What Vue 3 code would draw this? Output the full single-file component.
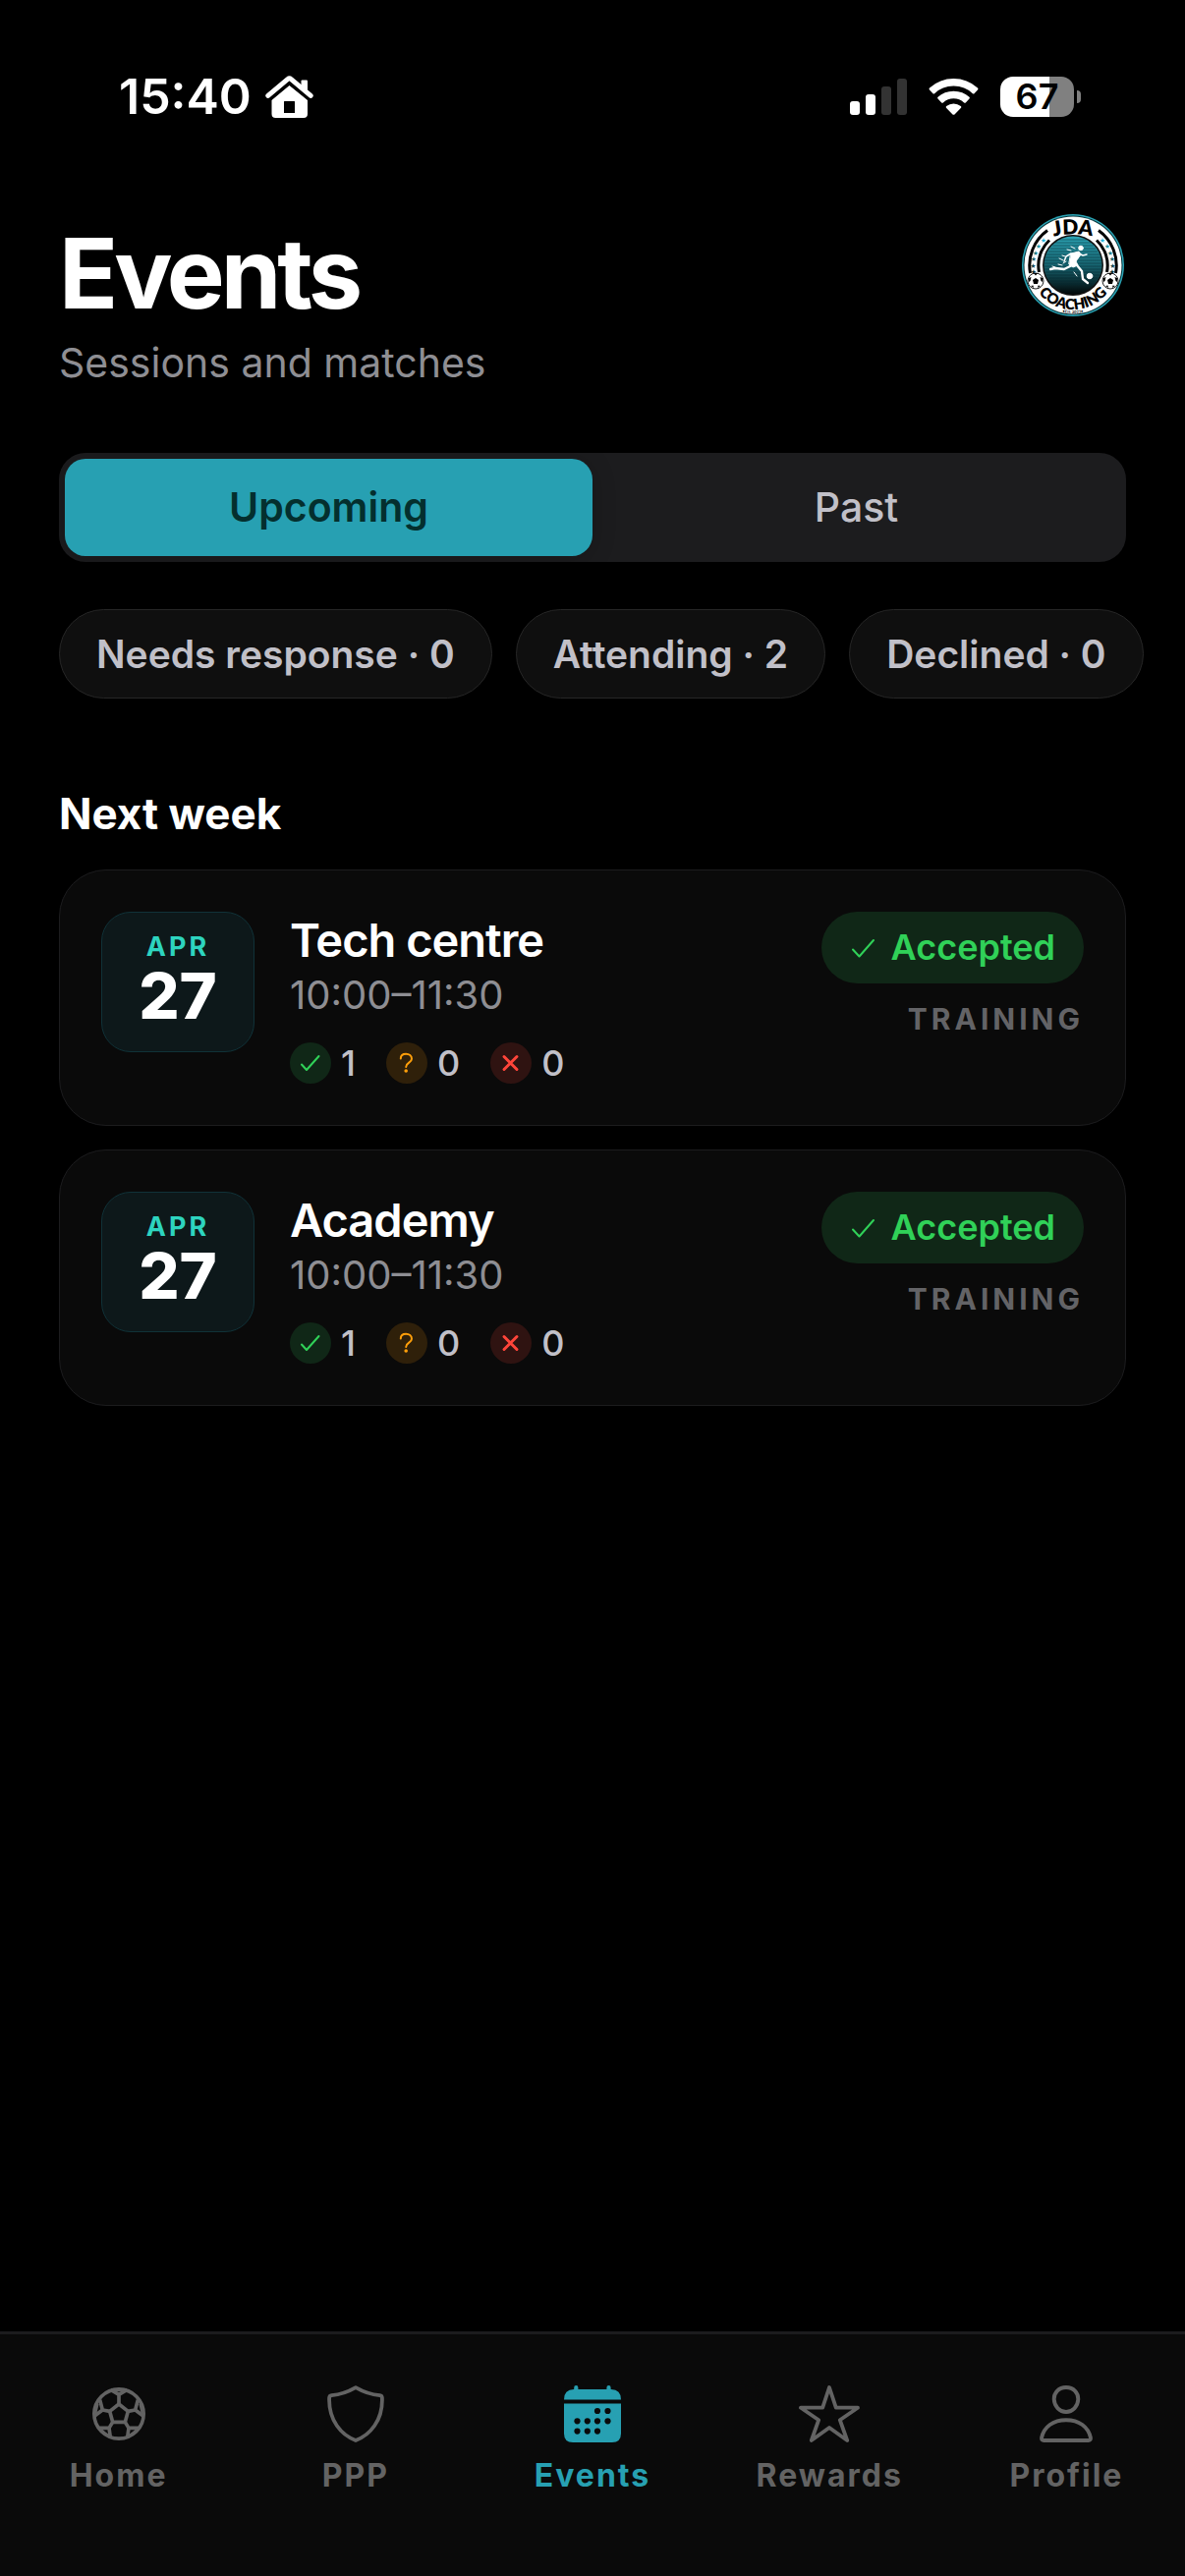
<script setup>
import { computed, ref } from 'vue'

const batteryLevel = 67
const period = ref('upcoming')
const activeFilter = ref(null)
const activeTab = ref('events')

const periods = [
  { id: 'upcoming', label: 'Upcoming' },
  { id: 'past', label: 'Past' },
]

const events = [
  { id: 1, month: 'APR', day: 27, title: 'Tech centre', time: '10:00–11:30', yes: 1, maybe: 0, no: 0, type: 'Training' },
  { id: 2, month: 'APR', day: 27, title: 'Academy', time: '10:00–11:30', yes: 1, maybe: 0, no: 0, type: 'Training' },
]

const filters = computed(() => [
  { id: 'pending', label: 'Needs response', count: 0 },
  { id: 'attending', label: 'Attending', count: events.length },
  { id: 'declined', label: 'Declined', count: 0 },
])

const tabs = [
  { id: 'home', label: 'Home' },
  { id: 'ppp', label: 'PPP' },
  { id: 'events', label: 'Events' },
  { id: 'rewards', label: 'Rewards' },
  { id: 'profile', label: 'Profile' },
]

function toggleFilter(id) {
  activeFilter.value = activeFilter.value === id ? null : id
}
</script>

<template>
  <div class="app-shell">
    <div class="status-bar">
      <div class="status-bar__side">
        <span class="status-bar__time">15:40</span>
        <svg class="status-bar__home" viewBox="0 0 49 43" aria-hidden="true">
          <path d="M36.500 5.500q0-1 1-1H42q1 0 1 1V20l-6.500-6z" fill="#fff" />
          <path d="M2.800 20.300 22.700 3.600q1.800-1.400 3.600 0L46.200 20.300" fill="none" stroke="#fff" stroke-width="5" stroke-linecap="round" />
          <path
            d="M24.500 10 43 25v14q0 4-4 4H10.500q-4 0-4-4V25zM19.500 26q-.5 0-.5.5V38h11V26.500q0-.5-.5-.5z"
            fill="#fff"
            fill-rule="evenodd"
          />
        </svg>
      </div>
      <div class="status-bar__side status-bar__side--right">
        <svg class="status-bar__signal" viewBox="0 0 58 37" aria-hidden="true">
          <rect x="0" y="23" width="10" height="14" rx="3" fill="#fff" />
          <rect x="16" y="16" width="10" height="21" rx="3" fill="#fff" />
          <rect x="32" y="8" width="10" height="29" rx="3" fill="#333" />
          <rect x="48" y="0" width="10" height="37" rx="3" fill="#333" />
        </svg>
        <svg class="status-bar__wifi" viewBox="0 0 51 37" fill="#fff" aria-hidden="true">
          <path d="M1 9.500Q11.500 0 25.500 0T50 9.500q1 1 0 2l-3.500 3.700q-.7.700-1.600 0Q37 7.500 25.500 7.500T6.100 15.200q-.9.700-1.600 0L1 11.500q-1-1 0-2z" />
          <path d="M9.500 18.800Q16 12.700 25.500 12.700t16 6.100q.9.900 0 1.800l-3.700 3.800q-.8.800-1.700 0Q31.500 20.300 25.500 20.300t-10.600 4.100q-.9.800-1.700 0l-3.700-3.800q-.9-.9 0-1.800z" />
          <path d="M18.200 28Q21.400 25.500 25.500 25.500t7.300 2.500q1 .9 0 1.900l-6.300 6.500q-1 .9-2 0l-6.300-6.500q-1-1 0-1.900z" />
        </svg>
        <div class="battery">
          <span class="battery__body" :style="{ '--level': batteryLevel + '%' }">{{ batteryLevel }}</span>
          <span class="battery__cap"></span>
        </div>
      </div>
    </div>

    <main class="page">
      <header class="page-header">
        <div>
          <h1>Events</h1>
          <p class="subtitle">Sessions and matches</p>
        </div>
        <svg class="club-logo" viewBox="0 0 106 104" role="img" aria-label="JDA Coaching">
          <defs>
            <linearGradient id="pitch" x1="0" y1="0" x2="0" y2="1">
              <stop offset="0" stop-color="#2ba3b4" />
              <stop offset="0.5" stop-color="#176470" />
              <stop offset="1" stop-color="#020708" />
            </linearGradient>
            <path id="arc-top" d="M28 23.500Q52 17.500 76 23.500" />
            <path id="arc-bottom" d="M7 52A45 45 0 0 0 97 52" />
            <path id="arc-foot" d="M3 52A49 49 0 0 0 101 52" />
          </defs>
          <circle cx="52" cy="52" r="52" fill="#2ba3b4" />
          <circle cx="52" cy="52" r="50.500" fill="#06343b" />
          <circle cx="52" cy="52" r="49.500" fill="#fff" />
          <g fill="none" stroke="#000" stroke-width="3">
            <path d="M8.500 60A44 44 0 0 1 26 16.500" />
            <path d="M95.500 60A44 44 0 0 0 78 16.500" />
            <path d="M17.500 59A35 35 0 0 1 28 26.500" />
            <path d="M86.500 59A35 35 0 0 0 76 26.500" />
          </g>
          <g class="club-logo__stars" text-anchor="middle">
            <text x="22" y="29" fill="#2bb5dc">★</text>
            <text x="17" y="35" fill="#2796a8">★</text>
            <text x="14" y="41.500" fill="#217c88">★</text>
            <text x="12" y="48" fill="#19606a">★</text>
            <text x="11.500" y="54.500" fill="#114850">★</text>
            <text x="12" y="61" fill="#0b2f34">★</text>
            <text x="82" y="29" fill="#2bb5dc">★</text>
            <text x="87" y="35" fill="#2796a8">★</text>
            <text x="90" y="41.500" fill="#217c88">★</text>
            <text x="92" y="48" fill="#19606a">★</text>
            <text x="92.500" y="54.500" fill="#114850">★</text>
            <text x="92" y="61" fill="#0b2f34">★</text>
          </g>
          <circle cx="52" cy="52" r="31" fill="#111" />
          <circle cx="52" cy="52" r="29.500" fill="url(#pitch)" />
          <g stroke="#062a30" stroke-width="0.700" opacity="0.700">
            <path d="M38 26h28M34 29h36M31 32h42M29 35h46M27 38h50M25 41h54M24 44h56M23 47h58M23 50h58M23 53h58M23 56h58M24 59h56M25 62h54M27 65h50M29 68h46M32 71h40" />
          </g>
          <!-- running player -->
          <g fill="#fff" stroke="#fff" stroke-linejoin="round" stroke-linecap="round">
            <circle cx="60" cy="34.500" r="2.300" />
            <path d="M50 40 58 38 60 41 55 48 57 52 52 54 48 51z" stroke-width="1" />
            <path d="M58 40l4 2 4-1M50 40l-5 3-2 5" fill="none" stroke-width="1.500" />
            <path d="M56 52l5 6 1 8 5 4" fill="none" stroke-width="2.300" />
            <path d="M51 52l-8 4-9-1-5 1" fill="none" stroke-width="2.300" />
            <path d="M50 33l4 2M46 36l4 1M41 42l3 1M38 45l4 2M42 50l3-2M37 51l4 1M31 53l3 1M53 59l3 4" fill="none" stroke-width="1" />
            <circle cx="69" cy="63" r="2.800" />
          </g>
          <g v-for="x in [14, 90]" :key="x">
            <circle :cx="x" cy="68" r="8" fill="#fff" stroke="#222" stroke-width="1" />
            <path :transform="`translate(${x} 68)`" d="M0-3 3-1 2 3H-2L-3-1zM-2-8H2L0-5.500zM-7-3-4.500-4-5.500 0-7 1zM7-3 4.500-4 5.500 0 7 1zM-5 5-2.500 4.500-2 7zM5 5 2.500 4.500 2 7z" fill="#000" />
          </g>
          <text class="club-logo__name" text-anchor="middle">
            <textPath href="#arc-top" startOffset="50%">JDA</textPath>
          </text>
          <text class="club-logo__sub" text-anchor="middle">
            <textPath href="#arc-bottom" startOffset="50%">COACHING</textPath>
          </text>
          <text class="club-logo__foot" text-anchor="middle">
            <textPath href="#arc-foot" startOffset="50%">•Est. 2023•</textPath>
          </text>
        </svg>
      </header>

      <div class="segmented">
        <button
          v-for="item in periods"
          :key="item.id"
          type="button"
          class="segmented__item"
          :class="{ 'is-active': period === item.id }"
          :aria-pressed="period === item.id"
          @click="period = item.id"
        >
          {{ item.label }}
        </button>
      </div>

      <div class="filters">
        <button
          v-for="filter in filters"
          :key="filter.id"
          type="button"
          class="chip"
          :aria-pressed="activeFilter === filter.id"
          @click="toggleFilter(filter.id)"
        >
          {{ filter.label }} · {{ filter.count }}
        </button>
      </div>

      <section class="week">
        <h2>Next week</h2>
        <article v-for="event in events" :key="event.id" class="event-card">
          <div class="date-box">
            <span class="date-box__month">{{ event.month }}</span>
            <span class="date-box__day">{{ event.day }}</span>
          </div>
          <div class="event-info">
            <h3>{{ event.title }}</h3>
            <p class="event-info__time">{{ event.time }}</p>
            <div class="counts">
              <span class="count">
                <span class="count__dot count__dot--yes">
                  <svg viewBox="0 0 42 42" aria-hidden="true"><path d="m12 22.500 5 5.500 12.500-14" /></svg>
                </span>
                {{ event.yes }}
              </span>
              <span class="count">
                <span class="count__dot count__dot--maybe">
                  <svg viewBox="0 0 42 42" aria-hidden="true">
                    <path d="M14.800 16.500c0-3 2.300-4.700 5.400-4.700s5.800 1.900 5.800 4.900c0 4.200-5.800 3.800-5.800 8.300" />
                    <circle cx="20.200" cy="29" r="1.800" fill="currentColor" stroke="none" />
                  </svg>
                </span>
                {{ event.maybe }}
              </span>
              <span class="count">
                <span class="count__dot count__dot--no">
                  <svg viewBox="0 0 42 42" aria-hidden="true"><path d="m14 14.500 13 13M27 14.500l-13 13" /></svg>
                </span>
                {{ event.no }}
              </span>
            </div>
          </div>
          <div class="event-side">
            <span class="status-pill">
              <svg viewBox="0 0 28 28" aria-hidden="true"><path d="m3 15.500 6.500 7L24 6" /></svg>
              Accepted
            </span>
            <span class="event-type">{{ event.type }}</span>
          </div>
        </article>
      </section>
    </main>

    <nav class="tab-bar" aria-label="Main">
      <a
        v-for="tab in tabs"
        :key="tab.id"
        :href="'#' + tab.id"
        class="tab"
        :class="{ 'is-active': activeTab === tab.id }"
        @click.prevent="activeTab = tab.id"
      >
        <svg v-if="tab.id === 'home'" viewBox="-6 -6 174 174" aria-hidden="true">
          <g fill="none" stroke="currentColor" stroke-width="11" stroke-linejoin="round">
            <circle cx="81" cy="81" r="75.500" />
            <path d="M81 51 109 73 100 106H62L53 73z" />
            <path d="M81 51V24M56 7 81 22 106 7M109 73 131 69M139 38 131 69 156 88M53 73 31 69M23 38 31 69 6 88" />
            <path d="M100 106 111 124M107 153 111 124 142 124M62 106 51 124M55 153 51 124 20 124" />
            <path d="M56 10H106M17 50 10 80M145 50 152 80M26 128 52 150M136 128 110 150" stroke-width="6" />
          </g>
        </svg>
        <svg v-else-if="tab.id === 'ppp'" viewBox="0 0 58 58" aria-hidden="true">
          <path
            d="M29 2.200C21 6.800 14 9.400 4.500 10.200Q2.200 10.500 2.100 12.800C1.400 36 14.500 50.500 29 56 43.500 50.500 56.600 36 55.900 12.800Q55.800 10.500 53.500 10.200C44 9.400 37 6.800 29 2.200z"
            fill="none"
            stroke="currentColor"
            stroke-width="3.800"
            stroke-linejoin="round"
          />
        </svg>
        <svg v-else-if="tab.id === 'events'" viewBox="0 0 58 58" aria-hidden="true">
          <path d="M10.200 4V2.200a2 2 0 0 1 4.200 0V4h29V2.200a2 2 0 0 1 4.200 0V4H48q10 0 10 10.500H0Q0 4 10 4z" fill="currentColor" />
          <path d="M0 18.500H58V49q0 9-9 9H9q-9 0-9-9z" fill="currentColor" />
          <g fill="#0a0a0a">
            <circle cx="34" cy="26" r="3.100" />
            <circle cx="44.500" cy="26" r="3.100" />
            <circle cx="13.500" cy="36.300" r="3.100" />
            <circle cx="23.800" cy="36.300" r="3.100" />
            <circle cx="34" cy="36.300" r="3.100" />
            <circle cx="44.500" cy="36.300" r="3.100" />
            <circle cx="13.500" cy="46.600" r="3.100" />
            <circle cx="23.800" cy="46.600" r="3.100" />
            <circle cx="34" cy="46.600" r="3.100" />
          </g>
        </svg>
        <svg v-else-if="tab.id === 'rewards'" viewBox="0 0 62 58" class="tab__star" aria-hidden="true">
          <path
            d="M31 2 37.800 22.700H60L41.800 35.200 49.200 56 31 43 12.800 56 20.200 35.200 2 22.700H24.200z"
            fill="none"
            stroke="currentColor"
            stroke-width="3.800"
            stroke-linejoin="round"
          />
        </svg>
        <svg v-else viewBox="0 0 58 58" aria-hidden="true">
          <g fill="none" stroke="currentColor" stroke-width="3.900" stroke-linejoin="round">
            <path d="M29 2C36.500 2 41.500 7.500 41.300 14 41 21.500 35.500 27 29 27S17 21.500 16.700 14C16.500 7.500 21.500 2 29 2z" />
            <path d="M29 35.200C42 35.200 51.500 42 53.900 53.200Q54.300 56 51.600 56H6.400Q3.700 56 4.100 53.200C6.500 42 16 35.200 29 35.200z" />
          </g>
        </svg>
        <span>{{ tab.label }}</span>
      </a>
    </nav>
  </div>
</template>

<style>
html,
body {
  margin: 0;
  background: #000;
}
</style>

<style scoped>
.app-shell {
  --accent: #27a0b2;
  --green: #30d158;
  --text-soft: #c1c0c8;
  --text-muted: #8e8e93;
  min-height: 100vh;
  display: flex;
  flex-direction: column;
  background: #000;
  color: #fff;
  font-family: Inter, 'Liberation Sans', sans-serif;
}

*,
*::before,
*::after {
  box-sizing: border-box;
}

h1,
h2,
h3,
p {
  margin: 0;
}

button {
  border: 0;
  font: inherit;
  cursor: pointer;
}

svg {
  display: block;
  flex: none;
}

.status-bar {
  display: flex;
  align-items: center;
  justify-content: space-between;
  padding: 68px 106px 0 121px;
  height: 128px;
}

.status-bar__side {
  display: flex;
  align-items: center;
  gap: 14px;
}

.status-bar__side--right {
  gap: 22px;
}

.status-bar__time {
  font-size: 50px;
  line-height: 60px;
  font-weight: 600;
}

.status-bar__home {
  width: 49px;
  height: 43px;
}

.status-bar__signal {
  width: 58px;
  height: 37px;
}

.status-bar__wifi {
  width: 51px;
  height: 37px;
}

.battery {
  display: flex;
  align-items: center;
  gap: 3px;
}

.battery__body {
  width: 75px;
  border-radius: 13px;
  background: linear-gradient(90deg, #fff var(--level), #808080 var(--level));
  color: #000;
  font-size: 36px;
  line-height: 41px;
  font-weight: 600;
  text-align: center;
}

.battery__cap {
  width: 4px;
  height: 13px;
  border-radius: 0 4px 4px 0;
  background: #808080;
}

.page {
  flex: 1;
  padding: 90px 60px 48px;
  overflow: hidden;
}

.page-header {
  display: flex;
  justify-content: space-between;
  align-items: flex-start;
}

h1 {
  font-size: 99px;
  line-height: 120px;
  font-weight: 700;
  letter-spacing: -4px;
}

.subtitle {
  margin-top: 4px;
  color: var(--text-muted);
  font-size: 41px;
  line-height: 54px;
}

.club-logo {
  width: 106px;
  height: 104px;
}

.club-logo__name {
  font: 800 21px Lato, sans-serif;
}

.club-logo__sub {
  font: 800 15px Lato, sans-serif;
}

.club-logo__foot {
  font: 700 4px Lato, sans-serif;
}

.club-logo__stars {
  font: 7px 'DejaVu Sans', sans-serif;
}

.segmented {
  display: flex;
  margin-top: 65px;
  padding: 6px;
  border-radius: 27px;
  background: #1c1c1e;
}

.segmented__item {
  flex: 1;
  padding: 24px 12px;
  border-radius: 21px;
  background: transparent;
  color: var(--text-soft);
  font-size: 41px;
  line-height: 51px;
  font-weight: 500;
}

.segmented__item.is-active {
  background: var(--accent);
  color: #042f2e;
  font-weight: 600;
  box-shadow: 0 3px 24px rgba(0, 0, 0, 0.2);
}

.filters {
  display: flex;
  gap: 24px;
  margin: 48px -60px 0;
  padding: 0 60px;
  overflow-x: auto;
  scrollbar-width: none;
}

.chip {
  flex: none;
  padding: 22px 37px;
  border: 1px solid #262626;
  border-radius: 46px;
  background: #0f0f0f;
  color: var(--text-soft);
  font-size: 39px;
  line-height: 45px;
  font-weight: 600;
  white-space: nowrap;
}

.week {
  display: flex;
  flex-direction: column;
  gap: 24px;
  margin-top: 90px;
}

h2 {
  padding-bottom: 6px;
  font-size: 44px;
  line-height: 54px;
  font-weight: 700;
}

.event-card {
  display: flex;
  align-items: flex-start;
  gap: 36px;
  padding: 42px;
  border: 1px solid #1c1c1e;
  border-radius: 48px;
  background: #0a0a0a;
}

.date-box {
  flex: none;
  display: flex;
  flex-direction: column;
  align-items: center;
  width: 156px;
  padding: 17px 0 24px;
  border: 1px solid #103238;
  border-radius: 30px;
  background: #0d181a;
}

.date-box__month {
  color: #2dd4bf;
  font-size: 27px;
  line-height: 36px;
  font-weight: 700;
  letter-spacing: 3px;
}

.date-box__day {
  font-size: 65px;
  line-height: 64px;
  font-weight: 800;
}

.event-info {
  flex: 1;
  min-width: 0;
}

h3 {
  font-size: 47px;
  line-height: 57px;
  font-weight: 600;
  letter-spacing: -1px;
}

.event-info__time {
  margin-top: 4px;
  color: var(--text-muted);
  font-size: 40px;
  line-height: 48px;
}

.counts {
  display: flex;
  gap: 31px;
  margin-top: 24px;
}

.count {
  display: flex;
  align-items: center;
  gap: 10px;
  color: var(--text-soft);
  font-size: 36px;
  line-height: 42px;
  font-weight: 500;
}

.count__dot {
  width: 42px;
  height: 42px;
  border-radius: 50%;
}

.count__dot svg,
.status-pill svg {
  fill: none;
  stroke: currentColor;
  stroke-width: 2;
  stroke-linecap: round;
  stroke-linejoin: round;
}

.count__dot--yes {
  background: #102717;
  color: var(--green);
}

.count__dot--maybe {
  background: #2f200a;
  color: #ff9f0a;
}

.count__dot--no {
  background: #2f1311;
  color: #ff453a;
}

.count__dot--no svg {
  stroke-width: 3;
}

.event-side {
  flex: none;
  display: flex;
  flex-direction: column;
  align-items: flex-end;
  gap: 18px;
}

.status-pill {
  display: flex;
  align-items: center;
  gap: 14px;
  padding: 14px 29px;
  border-radius: 37px;
  background: #102717;
  color: var(--green);
  font-size: 36px;
  line-height: 45px;
  font-weight: 600;
}

.status-pill svg {
  width: 28px;
  height: 28px;
}

.event-type {
  color: #636366;
  font-size: 30px;
  line-height: 36px;
  font-weight: 700;
  letter-spacing: 4px;
  text-transform: uppercase;
}

.tab-bar {
  position: sticky;
  bottom: 0;
  display: flex;
  padding: 52px 0 82px;
  border-top: 3px solid #1c1c1e;
  background: #0a0a0a;
}

.tab {
  flex: 1;
  display: flex;
  flex-direction: column;
  align-items: center;
  gap: 14px;
  color: #636363;
  font-size: 32px;
  line-height: 40px;
  font-weight: 700;
  letter-spacing: 2px;
  text-decoration: none;
}

.tab svg {
  width: 58px;
  height: 58px;
}

.tab .tab__star {
  width: 62px;
}

.tab.is-active {
  color: var(--accent);
}
</style>
